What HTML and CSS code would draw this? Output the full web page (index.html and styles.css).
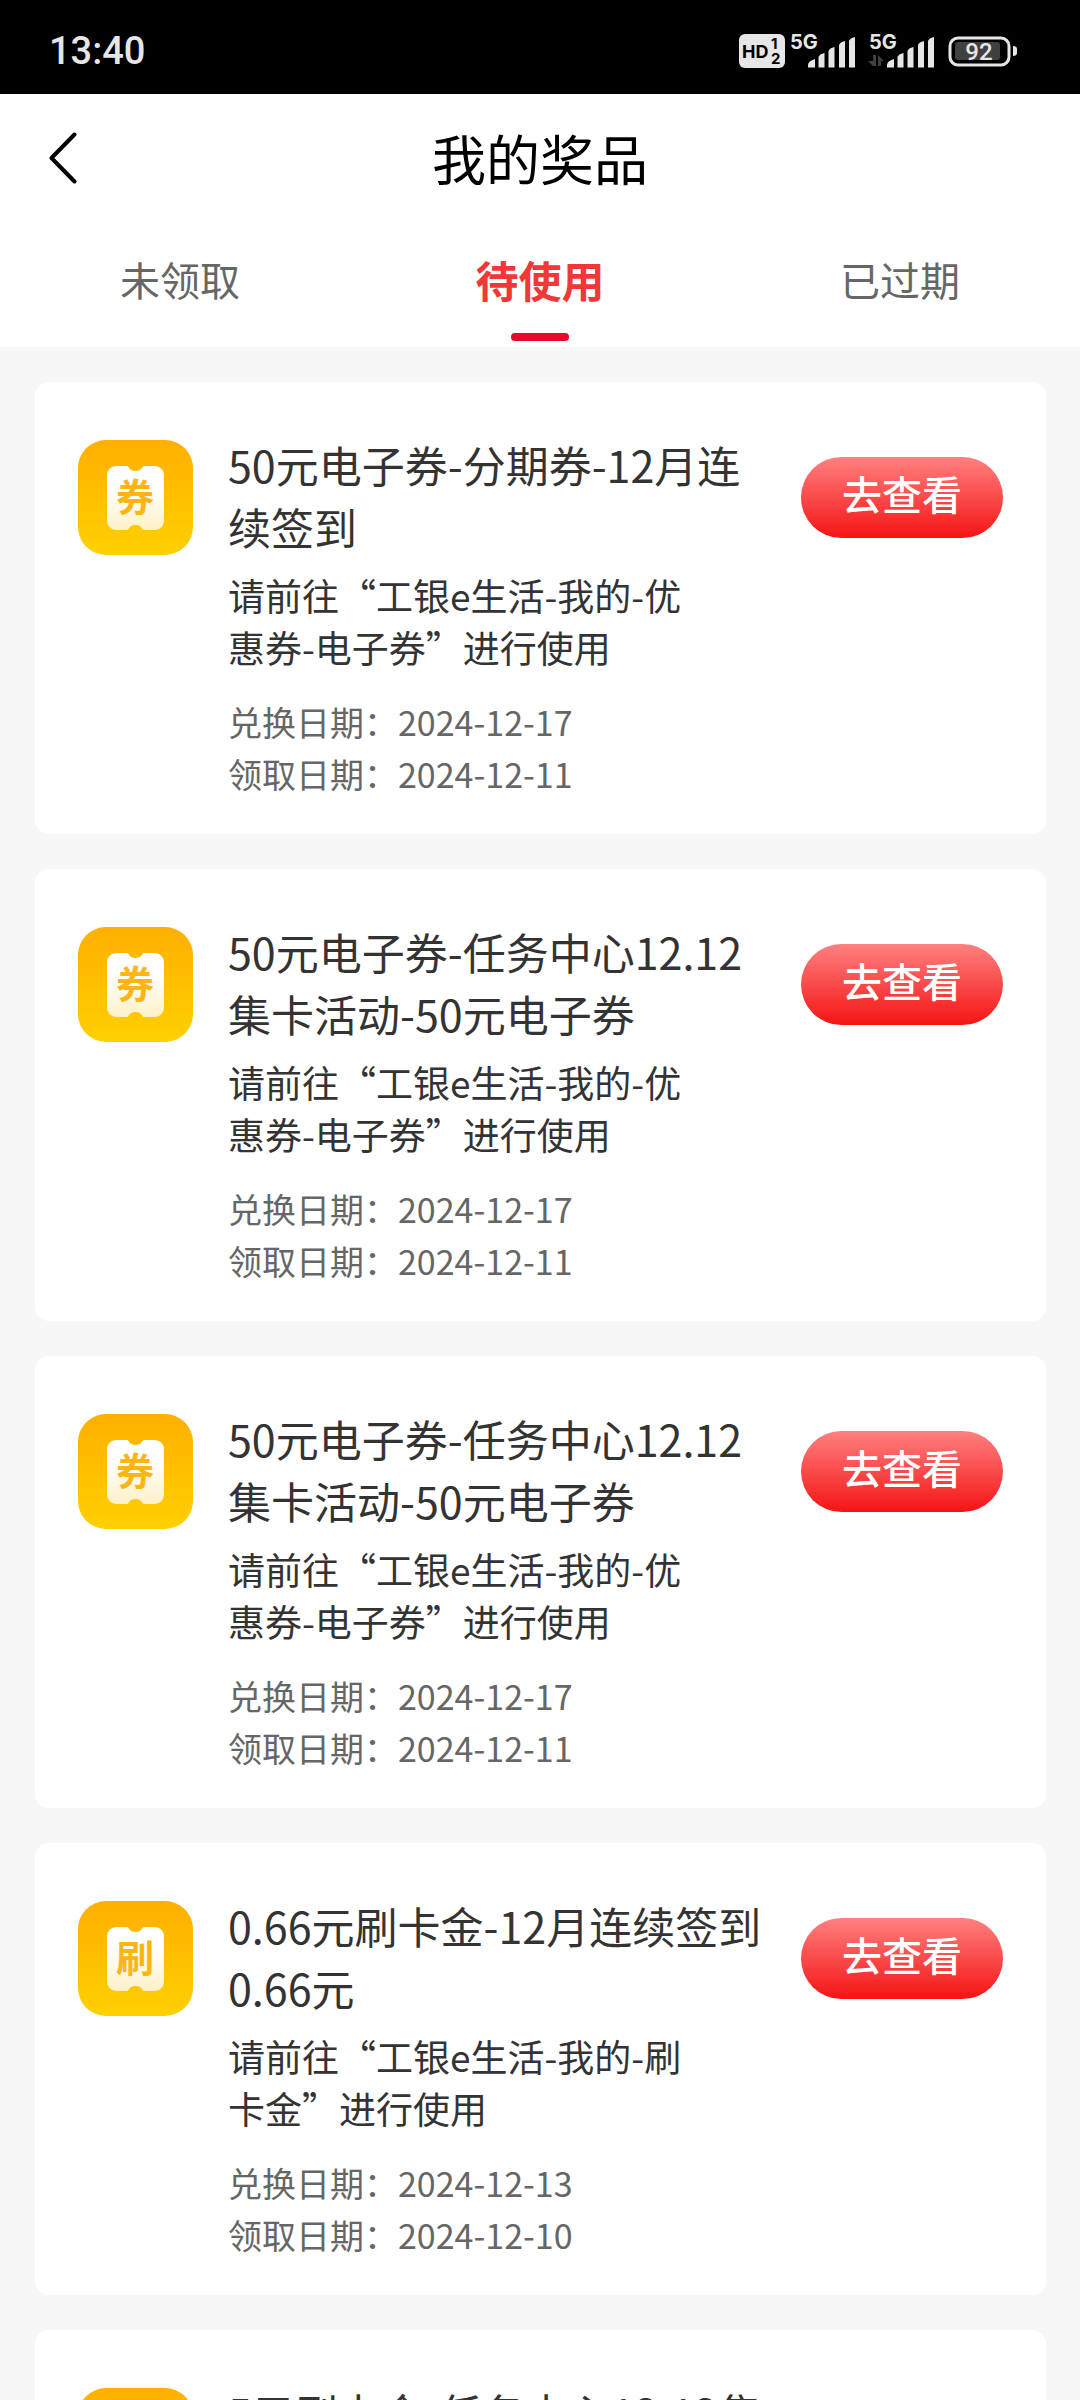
FILE: index.html
```html
<!DOCTYPE html>
<html lang="zh-CN">
<head>
<meta charset="utf-8">
<meta name="viewport" content="width=device-width, initial-scale=1">
<title>我的奖品</title>
<link rel="stylesheet" href="styles.css">
</head>
<body>
<svg class="defs" width="0" height="0" aria-hidden="true">
  <defs>
    <linearGradient id="tile" x1="0" y1="0" x2="0" y2="1"><stop offset="0" stop-color="#ffaf00"/><stop offset="1" stop-color="#ffd000"/></linearGradient>
    <linearGradient id="paper" x1="0" y1="0" x2="0" y2="1"><stop offset="0.3" stop-color="#ffffff"/><stop offset="1" stop-color="#fff1c9"/></linearGradient>
    <symbol id="ticket" viewBox="0 0 115 115">
      <rect width="115" height="115" rx="28" fill="url(#tile)"/>
      <path d="M38 26h11c2 0 2 5 8.500 5s6.500-5 8.500-5h11a9 9 0 0 1 9 9v46a9 9 0 0 1-9 9H66c-2 0-2-5-8.500-5s-6.500 5-8.500 5H38a9 9 0 0 1-9-9V35a9 9 0 0 1 9-9z" fill="url(#paper)"/>
    </symbol>
    <symbol id="signal" viewBox="0 0 48 31">
      <path d="M0 30.500V28q0-4 7-6v8.500zM10.500 30.500V20q1-3 6-4v14.500zM20.500 30.500V14q1-3 6-4v20.500zM31 30.500V8q1-3 6-4v26.500zM41 30.500V4q1-3 6-4v30.500z"/>
    </symbol>
  </defs>
</svg>
<div class="app">
  <div class="status">
    <span class="clock">13:40</span>
    <svg class="indicators" width="280" height="50" viewBox="738 26 280 50" role="img" aria-label="HD 5G 5G 92%">
      <rect x="739" y="34" width="46" height="34" rx="6"/>
      <g class="ink">
        <text x="742" y="58" font-size="18">HD</text>
        <text x="771" y="49" font-size="15">1</text>
        <text x="771" y="64" font-size="15">2</text>
      </g>
      <text x="790" y="49" font-size="20">5G</text>
      <use href="#signal" x="808" y="37" width="48" height="31"/>
      <text x="869" y="49" font-size="20">5G</text>
      <path class="dim" d="M873 55h3v11h-3l-5-5h5zM878 66V55l6 6h-3v5z"/>
      <use href="#signal" x="887" y="37" width="48" height="31"/>
      <rect class="dim" x="955" y="42" width="45" height="18" rx="3"/>
      <rect class="shell" x="950" y="38" width="59" height="27" rx="8"/>
      <path d="M1013 46q4 0 4 3v4q0 3-4 3z"/>
      <text class="level" x="979" y="60" font-size="24" text-anchor="middle">92</text>
    </svg>
  </div>

  <header class="header">
    <button class="back" type="button" aria-label="返回">
      <svg width="28" height="52" viewBox="0 0 28 52"><path d="M25.500 2.500 2.500 26l23 23.500"/></svg>
    </button>
    <h1 class="title">我的奖品</h1>
  </header>
  <nav class="tabs">
    <a class="tab" href="#unclaimed">未领取</a>
    <a class="tab active" href="#usable" aria-current="page">待使用</a>
    <a class="tab" href="#expired">已过期</a>
  </nav>

  <main class="list">
    <article class="card">
      <svg class="icon" viewBox="0 0 115 115"><use href="#ticket"/><text x="57" y="71">券</text></svg>
      <div class="body">
        <h2 class="name">50元电子券-分期券-12月连续签到</h2>
        <p class="desc">请前往“工银e生活-我的-优惠券-电子券”进行使用</p>
        <p class="date">兑换日期：2024-12-17</p>
        <p class="date">领取日期：2024-12-11</p>
      </div>
      <button class="view" type="button">去查看</button>
    </article>
    <article class="card">
      <svg class="icon" viewBox="0 0 115 115"><use href="#ticket"/><text x="57" y="71">券</text></svg>
      <div class="body">
        <h2 class="name">50元电子券-任务中心12.12集卡活动-50元电子券</h2>
        <p class="desc">请前往“工银e生活-我的-优惠券-电子券”进行使用</p>
        <p class="date">兑换日期：2024-12-17</p>
        <p class="date">领取日期：2024-12-11</p>
      </div>
      <button class="view" type="button">去查看</button>
    </article>
    <article class="card">
      <svg class="icon" viewBox="0 0 115 115"><use href="#ticket"/><text x="57" y="71">券</text></svg>
      <div class="body">
        <h2 class="name">50元电子券-任务中心12.12集卡活动-50元电子券</h2>
        <p class="desc">请前往“工银e生活-我的-优惠券-电子券”进行使用</p>
        <p class="date">兑换日期：2024-12-17</p>
        <p class="date">领取日期：2024-12-11</p>
      </div>
      <button class="view" type="button">去查看</button>
    </article>
    <article class="card">
      <svg class="icon" viewBox="0 0 115 115"><use href="#ticket"/><text x="57" y="71">刷</text></svg>
      <div class="body">
        <h2 class="name">0.66元刷卡金-12月连续签到0.66元</h2>
        <p class="desc">请前往“工银e生活-我的-刷卡金”进行使用</p>
        <p class="date">兑换日期：2024-12-13</p>
        <p class="date">领取日期：2024-12-10</p>
      </div>
      <button class="view" type="button">去查看</button>
    </article>
    <article class="card">
      <svg class="icon" viewBox="0 0 115 115"><use href="#ticket"/></svg>
      <div class="body">
        <h2 class="name">5元刷卡金-任务中心12.12集</h2>
      </div>
    </article>
  </main>
</div>
</body>
</html>
```
FILE: styles.css
```css
* { box-sizing: border-box; }

body {
  margin: 0;
  background: #f7f7f7;
  color: #333;
  font-family: "Noto Sans CJK SC", sans-serif;
}

h1, h2, p { margin: 0; font-weight: 400; }
button { border: 0; padding: 0; font: inherit; cursor: pointer; }
.defs { display: block; }

.app {
  display: flex;
  flex-direction: column;
  height: 100vh;
  overflow: hidden;
}

.status {
  display: flex;
  justify-content: space-between;
  align-items: center;
  padding: 26px 62px 18px 49px;
  background: #000;
  color: #e6e6e6;
}
.clock { font: 500 38px/40px Roboto, sans-serif; }
.indicators { fill: #e6e6e6; font-family: Inter, sans-serif; font-weight: 700; }
.ink { fill: #000; }
.dim { fill: #404040; }
.shell { fill: none; stroke: #e6e6e6; stroke-width: 3; }
.level { font-family: Roboto, sans-serif; font-weight: 500; }

.header {
  display: grid;
  grid-template-columns: 80px 1fr 80px;
  align-items: center;
  padding: 20px 0 24px;
  background: #fff;
}
.back { display: flex; justify-content: flex-end; padding-right: 3px; background: none; }
.back svg { fill: none; stroke: #000; stroke-width: 4; stroke-linecap: round; stroke-linejoin: round; }
.title { color: #000; font-size: 54px; line-height: 88px; text-align: center; }

.tabs { display: grid; grid-template-columns: repeat(3, 1fr); background: #fff; }
.tab {
  display: flex;
  flex-direction: column;
  align-items: center;
  padding-top: 23px;
  color: #666;
  font-size: 40px;
  line-height: 60px;
  text-decoration: none;
}
.tab::after { content: ""; width: 58px; height: 8px; margin: 24px 0 6px; border-radius: 4px; }
.tab.active { color: #f03838; font-size: 43px; font-weight: 700; }
.tab.active::after { background: #e60a2d; }

.list {
  flex: 1;
  min-height: 0;
  display: flex;
  flex-direction: column;
  gap: 35px;
  padding: 35px 34px 0 35px;
  overflow-y: auto;
  scrollbar-width: none;
}
.card {
  display: flex;
  flex-shrink: 0;
  align-items: flex-start;
  padding: 51px 43px 34px;
  border-radius: 14px;
  background: #fff;
}
.icon { flex: none; width: 115px; height: 115px; margin: 7px 35px 0 0; }
.icon text { fill: #fdb515; font-size: 38px; font-weight: 700; text-anchor: middle; }
.body { flex: 1; padding-right: 32px; }
.name { font-size: 43px; line-height: 62px; }
.desc { max-width: 480px; margin: 12px 0 23px; font-size: 37px; line-height: 52px; }
.date { color: #666; font-size: 34px; line-height: 52px; }
.view {
  flex: none;
  width: 202px;
  margin-top: 24px;
  padding-bottom: 9px;
  border-radius: 41px;
  background: linear-gradient(#ff8080, #f51414);
  color: #fff;
  font-size: 40px;
  font-weight: 500;
  line-height: 72px;
}
```
